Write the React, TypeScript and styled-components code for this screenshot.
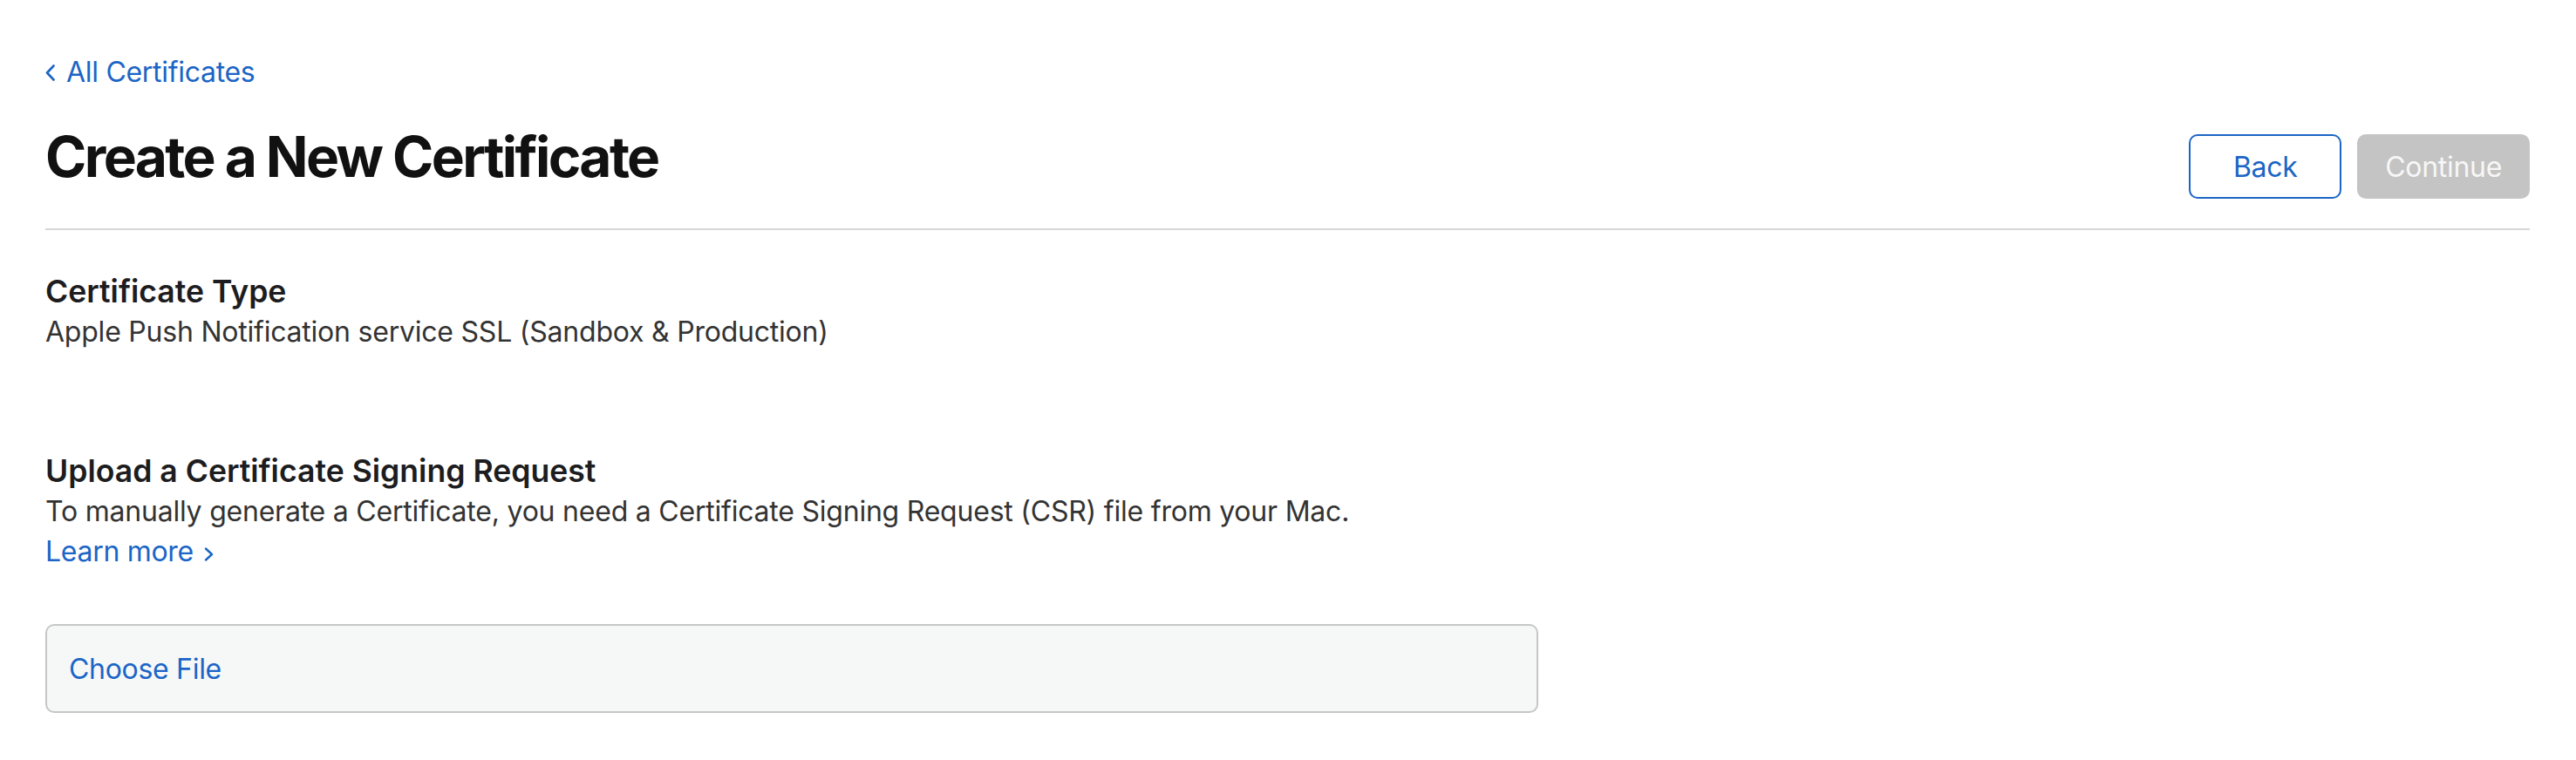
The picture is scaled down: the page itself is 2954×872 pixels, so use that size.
import React from "react";
import styled, { createGlobalStyle } from "styled-components";

const GlobalStyle = createGlobalStyle`
  html, body {
    margin: 0;
    padding: 0;
    background: #ffffff;
  }
  body {
    font-family: Inter, "Noto Sans", "Liberation Sans", sans-serif;
    color: #1d1d1f;
    -webkit-font-smoothing: antialiased;
  }
  * { box-sizing: border-box; }
`;

const BLUE = "#1b65c6";

const Page = styled.main`
  padding: 61px 53px 40px 52px;
  display: flex;
  flex-direction: column;
`;

const BackLink = styled.a`
  display: inline-flex;
  align-items: center;
  gap: 13px;
  align-self: flex-start;
  font-size: 32px;
  line-height: 44px;
  color: ${BLUE};
  text-decoration: none;
  letter-spacing: -0.3px;
  cursor: pointer;
`;

const Chevron = styled.svg`
  display: block;
  flex: none;
`;

const HeaderRow = styled.header`
  display: flex;
  justify-content: space-between;
  align-items: flex-start;
  margin-top: 39px;
  padding-bottom: 34px;
  border-bottom: 2px solid #d6d6d6;
`;

const Title = styled.h1`
  margin: 0;
  font-size: 64px;
  line-height: 72px;
  font-weight: 700;
  color: #111111;
  letter-spacing: -2.6px;
`;

const ButtonGroup = styled.div`
  display: flex;
  gap: 18px;
  margin-top: 10px;
`;

const Button = styled.button<{ $variant: "outline" | "disabled" }>`
  height: 74px;
  min-width: 175px;
  padding: 0 30px;
  border-radius: 10px;
  font-family: inherit;
  font-size: 32px;
  font-weight: 400;
  letter-spacing: -0.3px;
  display: inline-flex;
  align-items: center;
  justify-content: center;
  cursor: ${(p) => (p.$variant === "disabled" ? "default" : "pointer")};
  border: 2px solid ${(p) => (p.$variant === "outline" ? BLUE : "#c4c4c4")};
  background: ${(p) => (p.$variant === "outline" ? "#ffffff" : "#c4c4c4")};
  color: ${(p) => (p.$variant === "outline" ? BLUE : "#f7f7f7")};
`;

const Section = styled.section<{ $gap: number }>`
  margin-top: ${(p) => p.$gap}px;
  display: flex;
  flex-direction: column;
`;

const SectionTitle = styled.h2`
  margin: 0;
  font-size: 35.6px;
  line-height: 46px;
  font-weight: 600;
  color: #1d1d1f;
  letter-spacing: 0;
`;

const Text = styled.p`
  margin: 0;
  font-size: 32px;
  line-height: 46px;
  font-weight: 400;
  color: #333333;
  letter-spacing: -0.22px;
`;

const MoreLink = styled.a`
  display: inline-flex;
  align-items: baseline;
  gap: 12px;
  align-self: flex-start;
  font-size: 32px;
  line-height: 46px;
  color: ${BLUE};
  text-decoration: none;
  letter-spacing: -0.3px;
  cursor: pointer;
`;

const FileBox = styled.label`
  margin-top: 60px;
  width: 1712px;
  height: 102px;
  display: flex;
  align-items: center;
  padding: 0 25px;
  border: 2px solid #c6c6c6;
  border-radius: 10px;
  background: #f6f8f8;
  font-size: 32px;
  color: ${BLUE};
  letter-spacing: -0.3px;
  cursor: pointer;
`;

export default function App() {
  return (
    <>
      <GlobalStyle />
      <Page>
        <BackLink>
          <Chevron width="11" height="19" viewBox="0 0 11 19">
            <path d="M9.5 1.5 L2 9.5 L9.5 17.5" fill="none" stroke={BLUE} strokeWidth="2.6" strokeLinecap="round" strokeLinejoin="round" />
          </Chevron>
          All Certificates
        </BackLink>
        <HeaderRow>
          <Title>Create a New Certificate</Title>
          <ButtonGroup>
            <Button $variant="outline">Back</Button>
            <Button $variant="disabled" disabled>Continue</Button>
          </ButtonGroup>
        </HeaderRow>
        <Section $gap={48}>
          <SectionTitle>Certificate Type</SectionTitle>
          <Text>Apple Push Notification service SSL (Sandbox &amp; Production)</Text>
        </Section>
        <Section $gap={114}>
          <SectionTitle>Upload a Certificate Signing Request</SectionTitle>
          <Text>To manually generate a Certificate, you need a Certificate Signing Request (CSR) file from your Mac.</Text>
          <MoreLink>
            Learn more
            <Chevron width="11" height="16" viewBox="0 0 11 16">
              <path d="M2 1.5 L9 8 L2 14.5" fill="none" stroke={BLUE} strokeWidth="2.4" strokeLinecap="round" strokeLinejoin="round" />
            </Chevron>
          </MoreLink>
          <FileBox>Choose File</FileBox>
        </Section>
      </Page>
    </>
  );
}
